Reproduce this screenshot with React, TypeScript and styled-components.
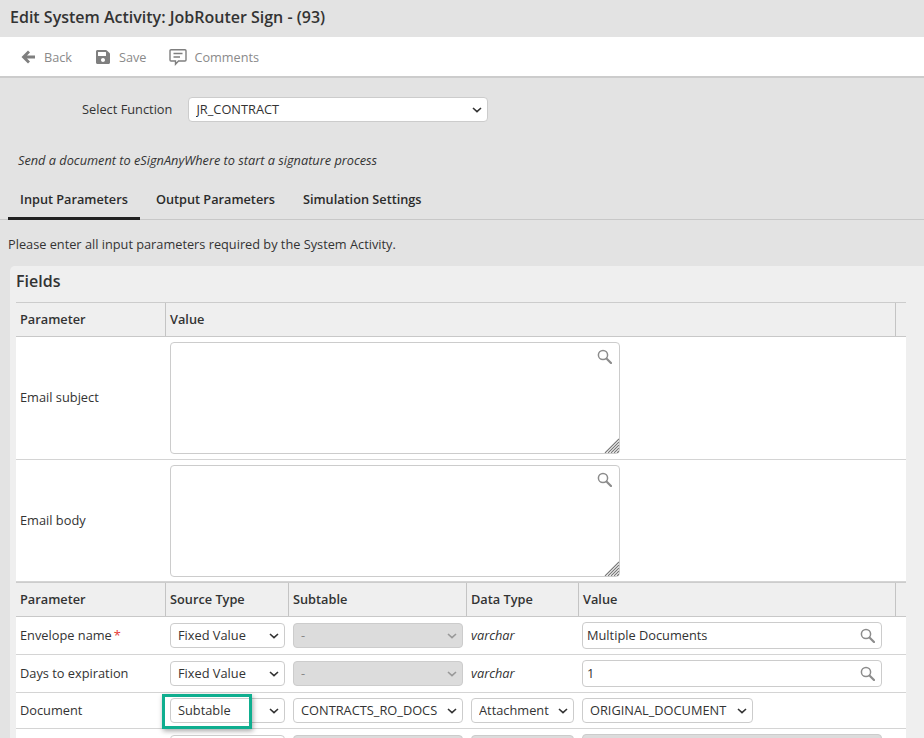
import React from 'react';
import styled, { createGlobalStyle } from 'styled-components';
import { FaSave } from 'react-icons/fa';

const chevron = (c: string) =>
  `url("data:image/svg+xml,%3Csvg xmlns='http://www.w3.org/2000/svg' width='10' height='6' viewBox='0 0 10 6'%3E%3Cpath d='M1 1 L5 4.6 L9 1' fill='none' stroke='${c}' stroke-width='1.6'/%3E%3C/svg%3E")`;

const Global = createGlobalStyle`
  html, body { margin: 0; padding: 0; height: 738px; overflow: hidden; background: #e3e3e3; }
  body { font-family: "Open Sans", "Liberation Sans", sans-serif; font-size: 12.8px; color: #333; }
  * { box-sizing: border-box; }
`;

const Page = styled.div`
  width: 924px;
  height: 738px;
  overflow: hidden;
  background: #e3e3e3;
`;
const TitleBar = styled.h1`
  margin: 0;
  height: 37px;
  padding: 6px 0 0 10px;
  font-size: 16px;
  line-height: 22px;
  font-weight: 600;
  color: #333;
`;
const Toolbar = styled.div`
  height: 41px;
  background: #fff;
  border-bottom: 2px solid #ccc;
  display: flex;
  align-items: center;
  padding-left: 21px;
  gap: 23px;
`;
const ToolButton = styled.div<{ $gap?: number }>`
  display: flex;
  align-items: center;
  gap: ${p => p.$gap ?? 8}px;
  color: #8a8a8a;
  font-size: 12.7px;
  line-height: 18px;
`;
const IconSlot = styled.span`
  display: flex;
  color: #7f7f7f;
`;
const FunctionRow = styled.div`
  display: flex;
  align-items: center;
  height: 25px;
  margin-top: 19px;
  padding-left: 82px;
  gap: 16px;
`;
const FunctionLabel = styled.label`
  font-size: 12.8px;
  padding-bottom: 1px;
`;
const NativeSelect = styled.select<{ $w: number }>`
  appearance: none;
  width: ${p => p.$w}px;
  height: 25px;
  font-family: inherit;
  font-size: 12.8px;
  color: #333;
  background: #fff ${chevron('%23333')} no-repeat right 5px center;
  border: 1px solid #ccc;
  border-radius: 4px;
  padding: 0 18px 2px 7px;
  outline: none;
  flex: none;
  &:disabled {
    background: #dcdcdc ${chevron('%23999')} no-repeat right 5px center;
    color: #888;
    opacity: 1;
  }
`;
const Description = styled.p`
  margin: 0;
  padding: 29px 0 0 18px;
  font-style: italic;
  font-size: 12.75px;
  line-height: 18px;
`;
const Tabs = styled.div`
  display: flex;
  height: 39px;
  margin-top: 12px;
  padding-left: 8px;
  gap: 4px;
  border-bottom: 1px solid #c8c8c8;
`;
const Tab = styled.div<{ $active?: boolean }>`
  height: 39px;
  padding: 9px 12px 0;
  font-weight: 600;
  font-size: 12.72px;
  line-height: 18px;
  color: #2b2b2b;
  border-bottom: 3px solid ${p => (p.$active ? '#222' : 'transparent')};
`;
const Hint = styled.p`
  margin: 0;
  padding: 15px 0 0 8px;
  height: 46px;
  font-size: 12.75px;
  line-height: 18px;
`;
const Panel = styled.section`
  margin-left: 10px;
  background: #efefef;
  border-top-left-radius: 5px;
  padding: 0 18px 0 6px;
`;
const PanelTitle = styled.h2`
  margin: 0;
  height: 36px;
  padding-top: 4px;
  font-size: 16px;
  line-height: 22px;
  font-weight: 600;
  color: #333;
`;
const Row = styled.div<{ $cols: string; $h: number; $head?: boolean }>`
  display: grid;
  grid-template-columns: ${p => p.$cols};
  height: ${p => p.$h}px;
  background: ${p => (p.$head ? '#efefef' : '#fff')};
  border-bottom: 1px solid ${p => (p.$head ? '#c8c8c8' : '#d4d4d4')};
`;
const TopRule = styled.div`
  height: 1px;
  background: #ccc;
`;
const HeadCell = styled.div`
  display: flex;
  align-items: center;
  padding: 0 0 1px 4px;
  font-weight: 600;
  font-size: 12.75px;
  color: #333;
  border-right: 1px solid #c4c4c4;
  &:last-child { border-right: none; }
`;
const Cell = styled.div<{ $pad?: number }>`
  display: flex;
  align-items: center;
  padding-left: ${p => p.$pad ?? 4}px;
  font-size: 12.8px;
  position: relative;
`;
const CellText = styled.span<{ $italic?: boolean }>`
  padding-bottom: 2px;
  font-style: ${p => (p.$italic ? 'italic' : 'normal')};
`;
const Required = styled.span`
  color: #e53935;
  margin-left: 2px;
`;
const SearchWrap = styled.div<{ $w: number; $h: number }>`
  position: relative;
  width: ${p => p.$w}px;
  height: ${p => p.$h}px;
`;
const BigText = styled.textarea`
  display: block;
  width: 100%;
  height: 100%;
  background: #fff;
  border: 1px solid #ccc;
  border-radius: 4px;
  outline: none;
  resize: none;
  font-family: inherit;
  font-size: 12.8px;
`;
const TextInput = styled.input`
  width: 100%;
  height: 100%;
  background: #fff;
  border: 1px solid #ccc;
  border-radius: 4px;
  outline: none;
  padding: 0 4px 2px;
  font-family: inherit;
  font-size: 12.8px;
  color: #333;
  &:disabled { background: #dcdcdc; }
`;
const SearchIcon = styled.svg<{ $top: number; $right: number }>`
  position: absolute;
  top: ${p => p.$top}px;
  right: ${p => p.$right}px;
  width: 15px;
  height: 15px;
`;
const Grip = styled.svg`
  position: absolute;
  right: 1px;
  bottom: 1px;
  width: 15px;
  height: 15px;
`;
const Highlight = styled.div`
  position: absolute;
  left: -4px;
  top: 1px;
  width: 90px;
  height: 35px;
  border: 3px solid #0fae8f;
  box-shadow: 1px 2px 5px rgba(0, 0, 0, 0.35);
  pointer-events: none;
`;

const Magnifier = ({ top, right }: { top: number; right: number }) => (
  <SearchIcon $top={top} $right={right} viewBox="0 0 15 15" fill="none" stroke="#8c8c8c">
    <circle cx="6" cy="6" r="4.6" strokeWidth="1.5" />
    <path d="M9.5 9.5 L14 14" strokeWidth="2.2" strokeLinecap="round" />
  </SearchIcon>
);

const BackIcon = () => (
  <svg width="15" height="14" viewBox="0 0 15 14" fill="#7f7f7f">
    <path d="M7 0.5 L0.5 7 L7 13.5 L9 11.5 L6 8.6 H14 V5.4 H6 L9 2.5 Z" />
  </svg>
);

const CommentIcon = () => (
  <svg width="18" height="18" viewBox="0 0 18 18" fill="none" stroke="#7f7f7f">
    <path d="M2 1.7 H16 A1 1 0 0 1 17 2.7 V12 A1 1 0 0 1 16 13 H9.5 L6.5 16.2 V13 H2 A1 1 0 0 1 1 12 V2.7 A1 1 0 0 1 2 1.7 Z" strokeWidth="1.4" />
    <path d="M4.5 5.5 H13.5 M4.5 9 H11" strokeWidth="1.4" />
  </svg>
);

const cols1 = '150px 730px 10px';
const cols2 = '150px 123px 178px 112px 317px 10px';
const Options = ({ v }: { v: string }) => <option>{v}</option>;

const ParamRow = ({
  name, req, source, sub, type, value, highlight, h = 38, locked,
}: {
  name?: string; req?: boolean; source: string; sub: string; type: string; value: string; highlight?: boolean; h?: number; locked?: boolean;
}) => {
  const subDisabled = sub === '-' || locked;
  const typeSelect = type === 'Attachment' || locked;
  return (
    <Row $cols={cols2} $h={h}>
      <Cell><CellText>{name}{req && <Required>*</Required>}</CellText></Cell>
      <Cell>
        <NativeSelect $w={115} defaultValue={source}><Options v={source} /></NativeSelect>
        {highlight && <Highlight />}
      </Cell>
      <Cell>
        <NativeSelect $w={170} disabled={subDisabled}><Options v={sub} /></NativeSelect>
      </Cell>
      {typeSelect ? (
        <Cell><NativeSelect $w={103} disabled={locked}><Options v={type} /></NativeSelect></Cell>
      ) : (
        <Cell><CellText $italic>{type}</CellText></Cell>
      )}
      <Cell $pad={3}>
        {type === 'Attachment' ? (
          <NativeSelect $w={171}><Options v={value} /></NativeSelect>
        ) : (
          <SearchWrap $w={300} $h={27}>
            <TextInput readOnly disabled={locked} value={value} />
            {!locked && <Magnifier top={6} right={7} />}
          </SearchWrap>
        )}
      </Cell>
      <Cell />
    </Row>
  );
};

const TextRow = ({ name, h }: { name: string; h: number }) => (
  <Row $cols={cols1} $h={h}>
    <Cell><CellText>{name}</CellText></Cell>
    <Cell>
      <SearchWrap $w={450} $h={112}>
        <BigText />
        <Magnifier top={7} right={8} />
        <Grip viewBox="0 0 15 15" stroke="#777" strokeWidth="1.1">
          <path d="M1 15 L15 1 M4 15 L15 4 M7 15 L15 7 M10 15 L15 10 M13 15 L15 13" />
        </Grip>
      </SearchWrap>
    </Cell>
    <Cell />
  </Row>
);

export default function App() {
  return (
    <Page>
      <Global />
      <TitleBar>Edit System Activity: JobRouter Sign - (93)</TitleBar>
      <Toolbar>
        <ToolButton><IconSlot><BackIcon /></IconSlot>Back</ToolButton>
        <ToolButton><IconSlot><FaSave size={16} /></IconSlot>Save</ToolButton>
        <ToolButton $gap={7}><IconSlot><CommentIcon /></IconSlot>Comments</ToolButton>
      </Toolbar>
      <FunctionRow>
        <FunctionLabel>Select Function</FunctionLabel>
        <NativeSelect $w={300}><option>JR_CONTRACT</option></NativeSelect>
      </FunctionRow>
      <Description>Send a document to eSignAnyWhere to start a signature process</Description>
      <Tabs>
        <Tab $active>Input Parameters</Tab>
        <Tab>Output Parameters</Tab>
        <Tab>Simulation Settings</Tab>
      </Tabs>
      <Hint>Please enter all input parameters required by the System Activity.</Hint>
      <Panel>
        <PanelTitle>Fields</PanelTitle>
        <TopRule />
        <Row $cols={cols1} $h={34} $head>
          <HeadCell>Parameter</HeadCell>
          <HeadCell>Value</HeadCell>
          <HeadCell />
        </Row>
        <TextRow name="Email subject" h={123} />
        <TextRow name="Email body" h={122} />
        <TopRule />
        <Row $cols={cols2} $h={34} $head>
          <HeadCell>Parameter</HeadCell>
          <HeadCell>Source Type</HeadCell>
          <HeadCell>Subtable</HeadCell>
          <HeadCell>Data Type</HeadCell>
          <HeadCell>Value</HeadCell>
          <HeadCell />
        </Row>
        <ParamRow name="Envelope name" req source="Fixed Value" sub="-" type="varchar" value="Multiple Documents" />
        <ParamRow name="Days to expiration" source="Fixed Value" sub="-" type="varchar" value="1" />
        <ParamRow name="Document" source="Subtable" sub="CONTRACTS_RO_DOCS" type="Attachment" value="ORIGINAL_DOCUMENT" highlight h={36} />
        <ParamRow source="Fixed Value" sub="-" type="varchar" value="" locked />
      </Panel>
    </Page>
  );
}
